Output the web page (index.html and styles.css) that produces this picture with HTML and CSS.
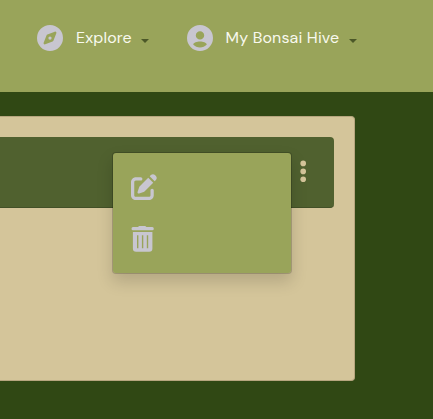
FILE: index.html
```html
<!DOCTYPE html>
<html lang="en">
<head>
<meta charset="utf-8">
<title>My Bonsai Hive</title>
<link rel="stylesheet" href="styles.css">
</head>
<body>
<nav class="navbar">
  <a class="nav-link explore">
    <svg class="nav-icon" viewBox="0 0 512 512"><path d="M256 512A256 256 0 1 0 256 0a256 256 0 1 0 0 512zm50.7-186.9L162.4 380.6c-19.4 7.5-38.5-11.6-31-31l55.5-144.3c3.3-8.5 9.9-15.1 18.4-18.4l144.3-55.5c19.4-7.5 38.5 11.6 31 31L325.1 306.7c-3.2 8.5-9.9 15.1-18.4 18.4zM288 256a32 32 0 1 0-64 0 32 32 0 1 0 64 0z"/></svg>
    <span class="label">Explore</span><i class="caret"></i>
  </a>
  <a class="nav-link account">
    <svg class="nav-icon" viewBox="0 0 26 26"><path fill-rule="evenodd" d="M13 0a13 13 0 1 0 0 26 13 13 0 0 0 0-26ZM13 6.200a4.200 4.200 0 1 1 0 8.400 4.200 4.200 0 0 1 0-8.400ZM13 22.600c-2.700 0-5-.9-6.800-3 .4-1.800 3.700-3 6.800-3s6.400 1.200 6.800 3c-1.800 2.100-4.100 3-6.800 3Z"/></svg>
    <span class="label">My Bonsai Hive</span><i class="caret"></i>
  </a>
</nav>
<main class="card">
  <header class="card-header">
    <div class="menu-anchor">
      <svg class="dots" viewBox="0 0 6 22"><circle cx="3.200" cy="3.400" r="2.800"/><circle cx="3.200" cy="11.400" r="2.800"/><circle cx="3.200" cy="19.200" r="2.800"/></svg>
      <div class="dropdown">
        <a class="item"><svg viewBox="0 0 512 512"><path d="M471.600 21.700c-21.900-21.900-57.300-21.900-79.200 0L368 46l97.900 97.900 24.400-24.400c21.900-21.900 21.900-57.300 0-79.200L471.600 21.700zm-299.200 220c-6.100 6.100-10.800 13.600-13.500 21.900l-29.600 88.800c-2.900 8.600-.6 18.100 5.800 24.600s15.900 8.700 24.600 5.800l88.800-29.600c8.200-2.700 15.700-7.400 21.900-13.500L437.700 172.300 339.700 74.300 172.400 241.700zM96 64C43 64 0 107 0 160V416c0 53 43 96 96 96H352c53 0 96-43 96-96V320c0-17.700-14.300-32-32-32s-32 14.300-32 32v96c0 17.700-14.300 32-32 32H96c-17.700 0-32-14.300-32-32V160c0-17.700 14.300-32 32-32h96c17.700 0 32-14.300 32-32s-14.300-32-32-32H96z"/></svg></a>
        <a class="item"><svg viewBox="0 0 26 26"><path fill-rule="evenodd" d="M8.200 0h6l1.300.9H21.300q1.500 0 1.500 1.800 0 1.600-1.500 1.600H2q-1.500 0-1.500-1.600Q.5.900 2 .9H6.900ZM1.900 6h19.500v16.600q0 3.200-3.200 3.200H5.100q-3.200 0-3.200-3.200ZM6 9.300v13h1.400v-13ZM10.900 9.300v13h1.400v-13ZM15.800 9.300v13h1.400v-13Z"/></svg></a>
      </div>
    </div>
  </header>
</main>
</body>
</html>
```
FILE: styles.css
```css
* { box-sizing: border-box; }
body {
  margin: 0;
  height: 419px;
  overflow: hidden;
  background: #304814;
  font: 16px/24px "DM Sans", "Open Sans", sans-serif;
  letter-spacing: .15px;
}
.navbar {
  display: flex;
  height: 92px;
  padding: 24px 0 0 37.4px;
  gap: 38px;
  background: #99a45a;
}
.nav-link {
  display: flex;
  align-items: center;
  height: 27px;
  color: #f8f9ee;
  white-space: nowrap;
}
.nav-icon { width: 26px; height: 26px; fill: #c8c6d0; }
.label { margin-left: 12.6px; }
.explore .label { width: 57px; }
.account .label { width: 115px; }
.caret {
  margin: 7px 0 0 8px;
  border: 4px solid transparent;
  border-top-color: #4c5828;
  border-bottom: 0;
}
.card {
  width: 355px;
  height: 265px;
  margin-top: 24px;
  padding: 20px 20px 0 0;
  background: #d4c59a;
  border: 1px solid #b6a67f;
  border-left: 0;
  border-radius: 0 4px 4px 0;
}
.card-header {
  display: flex;
  justify-content: flex-end;
  height: 71px;
  padding: 23px 28px 0 0;
  background: #50612f;
  border-bottom: 1px solid #425027;
  border-radius: 0 4px 4px 0;
}
.menu-anchor { position: relative; width: 6px; height: 22px; }
.dots { display: block; width: 6px; height: 22px; fill: #d4c59a; }
.dropdown {
  position: absolute;
  top: -8px;
  right: 14px;
  width: 180px;
  height: 122px;
  padding: 20.6px 18.4px;
  display: flex;
  flex-direction: column;
  gap: 26px;
  background: #99a45a;
  background-clip: padding-box;
  border: 1px solid rgba(0, 0, 0, .175);
  border-radius: 4px;
  box-shadow: 0 8px 16px rgba(0, 0, 0, .15);
}
.item { display: block; height: 26px; }
.item svg { display: block; width: 26px; height: 26px; fill: #c8c6d0; }
```
